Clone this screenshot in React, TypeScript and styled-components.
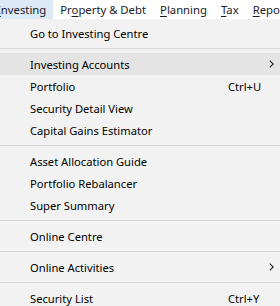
import styled, { createGlobalStyle } from "styled-components";

const Global = createGlobalStyle`
    html, body {
        margin: 0;
        padding: 0;
        background: #f2f2f2;
        overflow: hidden;
    }
    body {
        font-family: "Noto Sans", "Open Sans", sans-serif;
        font-size: 11.2px;
        color: #000;
    }
`

const Page = styled.div`
    width: 280px;
    height: 306px;
    overflow: hidden;
    display: flex;
    flex-direction: column;
`

const MenuBar = styled.div`
    height: 19px;
    background: #ffffff;
    display: flex;
    flex-direction: row;
    align-items: stretch;
    margin-left: -10px;
    white-space: nowrap;
    flex-shrink: 0;
`

const BarItem = styled.div<{
    $open?: boolean,
}>`
    padding: 0px 7px;
    display: flex;
    align-items: center;
    color: #1a1a2a;
    font-size: 11.3px;
    background-color: ${(props)=>props.$open ? "#dce9f6" : "transparent"};
    u {
        text-decoration: underline;
        text-underline-offset: 2px;
    }
`

const Dropdown = styled.div`
    background: #f2f2f2;
    padding: 3px 0px 0px 0px;
    display: flex;
    flex-direction: column;
`

const Row = styled.div<{
    $hover?: boolean,
}>`
    height: 22px;
    display: flex;
    flex-direction: row;
    align-items: center;
    padding: 0px 0px 0px 30px;
    background-color: ${(props)=>props.$hover ? "#e4e4e4" : "transparent"};
    white-space: nowrap;
`

const Label = styled.span`
    flex: 1;
`

const Shortcut = styled.span`
    width: 52px;
`

const Arrow = styled.span`
    width: 52px;
    display: flex;
    justify-content: flex-end;
    padding-right: 6px;
    box-sizing: border-box;
`

const Separator = styled.div`
    height: 1px;
    margin: 4px 0px;
    background: #d7d7d7;
`

function Chevron(){
    return (
        <Arrow>
            <svg width="5" height="8" viewBox="0 0 5 8">
                <path d="M0.8 0.6 L4.2 4 L0.8 7.4" fill="none" stroke="#222" strokeWidth="1.1"/>
            </svg>
        </Arrow>
    )
}

type item = { label: string, shortcut?: string, sub?: boolean, hover?: boolean } | "sep"

const items: item[] = [
    { label: "Go to Investing Centre" },
    "sep",
    { label: "Investing Accounts", sub: true, hover: true },
    { label: "Portfolio", shortcut: "Ctrl+U" },
    { label: "Security Detail View" },
    { label: "Capital Gains Estimator" },
    "sep",
    { label: "Asset Allocation Guide" },
    { label: "Portfolio Rebalancer" },
    { label: "Super Summary" },
    "sep",
    { label: "Online Centre" },
    "sep",
    { label: "Online Activities", sub: true },
    "sep",
    { label: "Security List", shortcut: "Ctrl+Y" },
]

export default function App(){
    return (
        <Page>
            <Global/>
            <MenuBar>
                <BarItem $open><span><u>I</u>nvesting</span></BarItem>
                <BarItem><span>Pr<u>o</u>perty &amp; Debt</span></BarItem>
                <BarItem><span><u>P</u>lanning</span></BarItem>
                <BarItem><span><u>T</u>ax</span></BarItem>
                <BarItem><span><u>R</u>epo</span></BarItem>
            </MenuBar>
            <Dropdown>
                {items.map((obj, i)=>(
                    obj === "sep" ? <Separator key={i}/> : (
                        <Row key={i} $hover={obj.hover}>
                            <Label>{obj.label}</Label>
                            {obj.shortcut ? <Shortcut>{obj.shortcut}</Shortcut> : null}
                            {obj.sub ? <Chevron/> : null}
                        </Row>
                    )
                ))}
            </Dropdown>
        </Page>
    );
}
